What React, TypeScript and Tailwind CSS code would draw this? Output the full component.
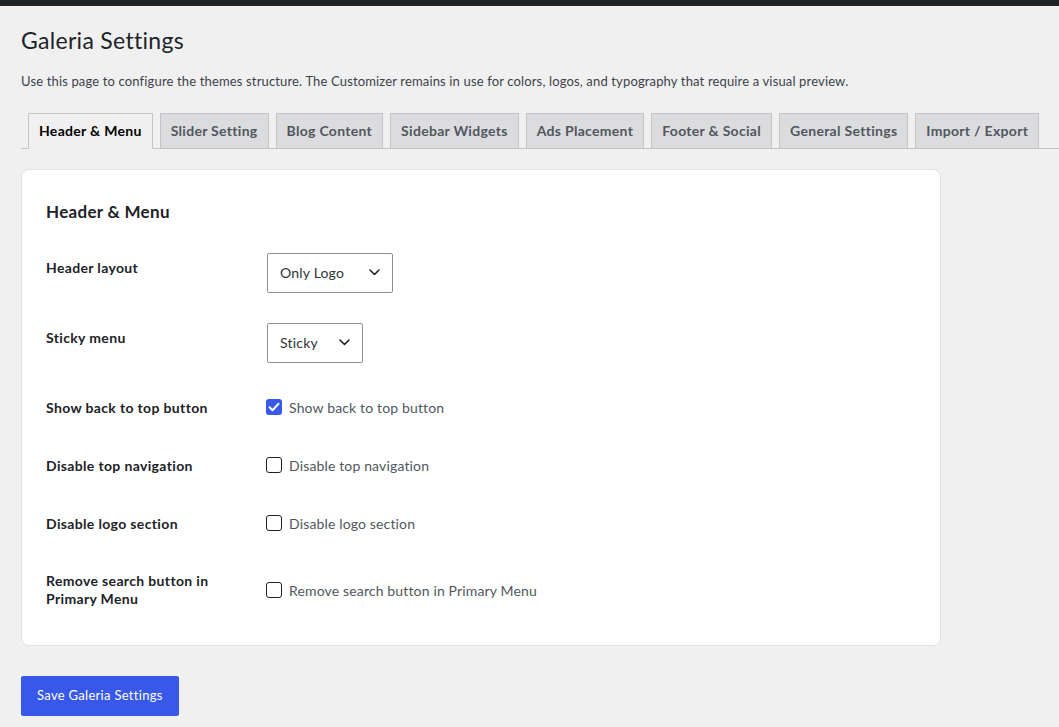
import React from "react";

const FONT = { fontFamily: '"Lato", "Open Sans", sans-serif' };

const tabs = [
  "Header & Menu",
  "Slider Setting",
  "Blog Content",
  "Sidebar Widgets",
  "Ads Placement",
  "Footer & Social",
  "General Settings",
  "Import / Export",
];

function Chevron() {
  return (
    <svg width="11" height="7" viewBox="0 0 11 7" fill="none">
      <path d="M1 1l4.5 4.5L10 1" stroke="#1d2327" strokeWidth="1.6" strokeLinecap="round" strokeLinejoin="round" />
    </svg>
  );
}

function FakeSelect({ value, width }: { value: string; width: string }) {
  return (
    <div className={`${width} ml-px h-[40px] border border-[#8c8f94] rounded-[2px] bg-white flex items-center justify-between pl-[12px] pr-[12px] pb-[2px] text-[14px] tracking-[0.2px] text-[#2c3338]`}>
      <span>{value}</span>
      <Chevron />
    </div>
  );
}

function Check({ checked, label }: { checked?: boolean; label: string }) {
  return (
    <label className="flex items-center gap-[7px] text-[14px] tracking-[0.15px] text-[#50575e]">
      {checked ? (
        <span className="w-[16px] h-[16px] rounded-[3px] bg-[#3858e9] flex items-center justify-center">
          <svg width="12" height="10" viewBox="0 0 12 10" fill="none">
            <path d="M1.5 5.2l3 3L10.5 1.8" stroke="white" strokeWidth="2" strokeLinecap="round" strokeLinejoin="round" />
          </svg>
        </span>
      ) : (
        <span className="w-[16px] h-[16px] rounded-[3px] border border-[#1d2327] bg-white" />
      )}
      <span>{label}</span>
    </label>
  );
}

const TH = "text-[14px] leading-[20px] font-bold tracking-[0.35px]";

export default function App() {
  return (
    <div className="min-h-[727px] bg-[#f0f0f1] text-[#1d2327]" style={FONT}>
      <div className="h-[6px] bg-[#1d2327]" />
      <div className="pl-[21px]">
        <h1 className="pt-[20px] text-[23px] leading-[29px] font-normal tracking-[0.3px] text-[#1d2327]">Galeria Settings</h1>
        <p className="mt-[16px] text-[13px] leading-[20px] tracking-[0.15px] text-[#3c434a]">
          Use this page to configure the themes structure. The Customizer remains in use for colors, logos, and typography that require a visual preview.
        </p>
        <div className="mt-[22px] flex items-end border-b border-[#c3c4c7] pl-[7px]">
          {tabs.map((t, i) => (
            <div
              key={t}
              className={
                i === 0
                  ? "mr-[7px] -mb-px px-[10px] py-[5px] text-[14px] leading-[24px] font-bold tracking-[0.3px] border border-[#c3c4c7] border-b-[#f0f0f1] bg-[#f0f0f1] text-black"
                  : "mr-[7px] px-[10px] py-[5px] text-[14px] leading-[24px] font-bold tracking-[0.3px] border border-b-0 border-[#c3c4c7] bg-[#dcdcde] text-[#50575e]"
              }
            >
              {t}
            </div>
          ))}
        </div>
        <div className="mt-[20px] w-[920px] bg-white border border-[#e2e2e4] rounded-[8px] pt-[30px] pb-[17px] px-[24px]">
          <h2 className="text-[17px] leading-[24px] font-bold tracking-[0.3px] text-[#1d2327]">Header &amp; Menu</h2>
          <div className="mt-[14px] grid grid-cols-[220px_1fr]">
            <div className={`pt-[20px] ${TH}`}>Header layout</div>
            <div className="py-[15px]"><FakeSelect value="Only Logo" width="w-[126px]" /></div>

            <div className={`pt-[20px] ${TH}`}>Sticky menu</div>
            <div className="py-[15px]"><FakeSelect value="Sticky" width="w-[96px]" /></div>

            <div className={`pt-[20px] pb-[18px] ${TH}`}>Show back to top button</div>
            <div className="flex items-center"><Check checked label="Show back to top button" /></div>

            <div className={`pt-[20px] pb-[18px] ${TH}`}>Disable top navigation</div>
            <div className="flex items-center"><Check label="Disable top navigation" /></div>

            <div className={`pt-[20px] pb-[18px] ${TH}`}>Disable logo section</div>
            <div className="flex items-center"><Check label="Disable logo section" /></div>

            <div className="pt-[20px] pb-[20px] text-[14px] leading-[18px] font-bold tracking-[0.35px]">Remove search button in<br />Primary Menu</div>
            <div className="flex items-center"><Check label="Remove search button in Primary Menu" /></div>
          </div>
        </div>
        <button className="mt-[30px] h-[40px] px-[16px] bg-[#3858e9] text-white text-[13px] tracking-[0.3px] rounded-[2px]">
          Save Galeria Settings
        </button>
      </div>
    </div>
  );
}
